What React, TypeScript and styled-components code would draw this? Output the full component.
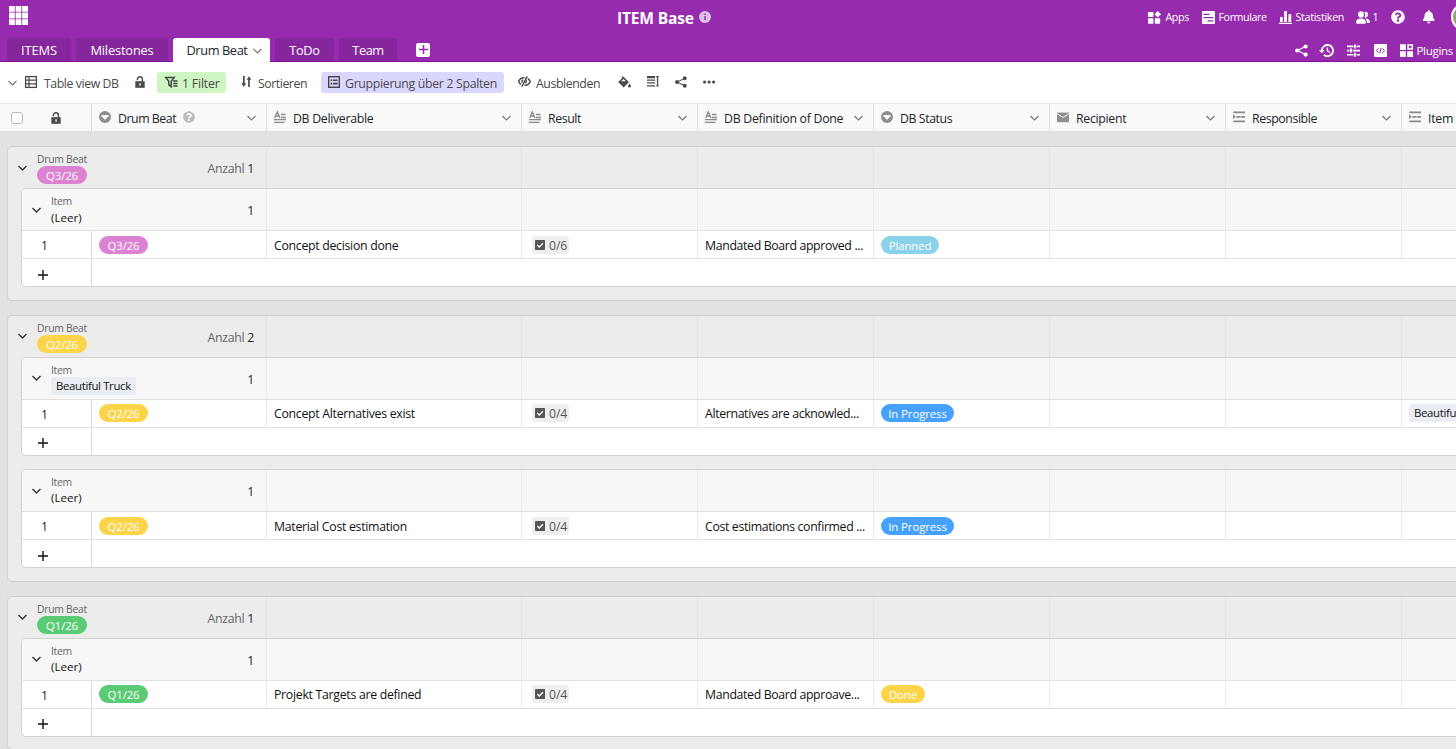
import React from "react";
import styled, { createGlobalStyle } from "styled-components";
import { FaBell, FaQuestionCircle } from "react-icons/fa";

const GlobalStyle = createGlobalStyle`
  *, *::before, *::after { box-sizing: border-box; }
  body {
    margin: 0;
    overflow: hidden;
    font-family: "Open Sans", "Noto Sans", sans-serif;
    font-size: 12.3px;
    color: #212529;
    background: #fff;
  }
`;

const Page = styled.div`
  display: flex;
  flex-direction: column;
  width: 1456px;
  height: 749px;
  overflow: hidden;
  background: #fff;
`;

const Header = styled.header`
  flex: none;
  height: 62px;
  background: #972bae;
  border-bottom: 1px solid #8410a0;
  color: #fff;
`;

const HeaderRow = styled.div<{ $h: number }>`
  display: flex;
  align-items: center;
  height: ${(p) => p.$h}px;
`;

const Svg = styled.svg`
  display: block;
  flex: none;
  overflow: visible;
`;

const Label = styled.span<{
  $w?: number;
  $ls?: number;
  $size?: number;
  $color?: string;
  $bold?: boolean;
  $drop?: number;
}>`
  flex: none;
  display: block;
  white-space: nowrap;
  line-height: 18px;
  padding-top: ${(p) => p.$drop ?? 2}px;
  width: ${(p) => (p.$w ? `${p.$w}px` : "auto")};
  letter-spacing: ${(p) => p.$ls ?? 0}px;
  font-size: ${(p) => p.$size ?? 12.3}px;
  font-weight: ${(p) => (p.$bold ? 700 : 400)};
  color: ${(p) => p.$color ?? "inherit"};
`;

const Slot = styled.div<{ $ml: number; $gap?: number; $mt?: number }>`
  display: flex;
  flex: none;
  align-items: center;
  gap: ${(p) => p.$gap ?? 0}px;
  margin-left: ${(p) => p.$ml}px;
  margin-top: ${(p) => p.$mt ?? 0}px;
`;

const Actions = styled.div<{ $w: number; $mt: number }>`
  display: flex;
  flex: none;
  align-items: center;
  width: ${(p) => p.$w}px;
  margin-left: auto;
  margin-top: ${(p) => p.$mt}px;
  overflow: hidden;
`;

const Avatar = styled.div`
  flex: none;
  width: 28px;
  height: 28px;
  margin-left: 16px;
  border: 2px solid #fff;
  border-radius: 50%;
  background: #a99a78;
`;

const Tab = styled.div<{ $w: number; $active?: boolean }>`
  display: flex;
  flex: none;
  align-items: center;
  align-self: flex-end;
  justify-content: center;
  gap: 5px;
  width: ${(p) => p.$w}px;
  height: ${(p) => (p.$active ? 24 : 23)}px;
  margin-right: 5px;
  margin-bottom: ${(p) => (p.$active ? -1 : 0)}px;
  padding: 0 0 ${(p) => (p.$active ? 1 : 0)}px ${(p) => (p.$active ? 5 : 0)}px;
  border-radius: 3px 3px 0 0;
  background: ${(p) => (p.$active ? "#fff" : "#86269c")};
  color: ${(p) => (p.$active ? "#212529" : "#fff")};
`;

const AddTab = styled.div`
  display: flex;
  align-items: center;
  justify-content: center;
  width: 14px;
  height: 14px;
  margin: 2px 0 0 14px;
  border-radius: 2px;
  background: #fff;
`;

const Toolbar = styled.div`
  display: flex;
  flex: none;
  align-items: center;
  height: 41px;
  color: #4a4a4a;
`;

const Pill = styled.div<{ $ml: number; $w: number; $bg: string; $pad: number; $gap: number }>`
  display: flex;
  flex: none;
  align-items: center;
  gap: ${(p) => p.$gap}px;
  width: ${(p) => p.$w}px;
  height: 21px;
  margin-left: ${(p) => p.$ml}px;
  padding-left: ${(p) => p.$pad}px;
  border-radius: 3px;
  background: ${(p) => p.$bg};
`;

const ColumnBar = styled.div`
  display: flex;
  flex: none;
  height: 29px;
  border-top: 1px solid #e8e8e8;
  border-bottom: 1px solid #e0e0e0;
  background: #f9f9f9;
`;

const RowTools = styled.div`
  display: flex;
  flex: none;
  align-items: center;
  width: 92px;
  padding-left: 11px;
  gap: 39px;
  border-right: 1px solid #dcdcdc;
`;

const Checkbox = styled.div`
  width: 12px;
  height: 12px;
  border: 1px solid #b9b9c6;
  border-radius: 3px;
  background: #fff;
`;

const ColumnHead = styled.div<{ $w: number }>`
  display: flex;
  flex: none;
  align-items: center;
  width: ${(p) => p.$w}px;
  padding: 0 10px 0 7px;
  border-right: 1px solid #dedede;
`;

const ColumnName = styled.div`
  display: flex;
  align-items: center;
  gap: 7px;
  margin-right: auto;
  svg { margin-top: -1px; }
`;

const Body = styled.main`
  flex: 1;
  padding: 14px 0 0 7px;
  background: #e2e2e2;
  overflow: hidden;
`;

const Group = styled.section`
  width: 1500px;
  margin-bottom: 14px;
  padding-bottom: 12.75px;
  border: 1px solid #cfcfcf;
  border-radius: 5px;
  background: #ececec;
`;

const GroupHead = styled.div`
  display: flex;
  height: 41px;
`;

const HeadMain = styled.div<{ $w: number; $line: string }>`
  display: flex;
  flex: none;
  align-items: center;
  width: ${(p) => p.$w}px;
  padding: 0 12px 0 10px;
  border-right: 1px solid ${(p) => p.$line};
`;

const HeadText = styled.div`
  display: flex;
  flex-direction: column;
  align-items: flex-start;
  align-self: flex-start;
  height: 36px;
  margin: 5px auto 0 10px;
`;

const Caption = styled.div`
  height: 14px;
  line-height: 15px;
  font-size: 10.4px;
  letter-spacing: -0.28px;
  color: #666;
  white-space: nowrap;
`;

const Option = styled.div<{ $bg: string; $w: number }>`
  flex: none;
  width: ${(p) => p.$w}px;
  height: 18px;
  border-radius: 9px;
  background: ${(p) => p.$bg};
  color: #fff;
  font-size: 11.4px;
  line-height: 19px;
  letter-spacing: -0.1px;
  text-align: center;
  white-space: nowrap;
`;

const Link = styled.div`
  flex: none;
  height: 18px;
  padding: 0 5px;
  border-radius: 3px;
  background: #eaedf4;
  color: #111;
  font-size: 11.4px;
  line-height: 18px;
  letter-spacing: -0.35px;
  white-space: nowrap;
`;

const Empty = styled.div`
  height: 18px;
  margin-top: 0.5px;
  color: #111;
  font-size: 11.6px;
  line-height: 18px;
`;

const Count = styled.div`
  display: flex;
  gap: 3px;
  padding-top: 2px;
  letter-spacing: -0.3px;
  color: #666;
  b { font-weight: 400; color: #212529; }
`;

const Cell = styled.div<{ $w: number; $line?: string }>`
  display: flex;
  flex: none;
  align-items: center;
  width: ${(p) => p.$w}px;
  padding: 0 7px;
  border-right: 1px solid ${(p) => p.$line ?? "#ebebeb"};
`;

const SubGroup = styled.div`
  margin: 0 0 0 13px;
  border: 1px solid #d2d2d2;
  border-radius: 5px;
  background: #fff;
  overflow: hidden;
  & + & { margin-top: 13.4px; }
`;

const SubHead = styled.div`
  display: flex;
  height: 41.15px;
  background: #f7f7f7;
`;

const Row = styled.div<{ $h: number }>`
  display: flex;
  height: ${(p) => p.$h}px;
  border-top: 1px solid #e1e1e1;
`;

const IndexCell = styled.div`
  display: flex;
  flex: none;
  align-items: center;
  width: 70px;
  padding: 2px 0 0 19px;
  border-right: 1px solid #d8d8d8;
`;

const AddCell = styled(IndexCell)`
  padding: 4px 0 0 16px;
`;

const Progress = styled.div`
  display: flex;
  align-items: center;
  gap: 4px;
  height: 18px;
  margin-left: 3px;
  padding: 0 2px 0 3px;
  border-radius: 3px;
  background: #eeeeee;
  color: #555;
`;

const Chevron = ({ c = "#666", sw = 1.2 }: { c?: string; sw?: number }) => (
  <Svg width={9} height={6} viewBox="0 0 9 6" fill="none" stroke={c} strokeWidth={sw}>
    <path d="M.5 1 4.5 5l4-4" />
  </Svg>
);

const GridLogo = () => (
  <Svg width="19" height="19" viewBox="0 0 19 19" fill="#fff">
    {[0, 6.6, 13.2].map((y) =>
      [0, 6.6, 13.2].map((x) => <rect key={`${x}-${y}`} x={x} y={y} width="5.8" height="5.8" rx=".3" />)
    )}
  </Svg>
);

const InfoIcon = () => (
  <Svg width="12" height="12" viewBox="0 0 12 12">
    <circle cx="6" cy="6" r="6" fill="#e0bfe7" />
    <path d="M5.3 5h1.5v4H5.3zM5.3 2.6h1.5v1.3H5.3z" fill="#972bae" />
  </Svg>
);

const AppsIcon = () => (
  <Svg width="13" height="13" viewBox="0 0 13 13" fill="#fff">
    <rect y="1" width="5.4" height="5" rx=".6" />
    <rect y="7.3" width="5.4" height="5.4" rx=".6" />
    <rect x="6.8" y="7.3" width="5.4" height="5.4" rx=".6" />
    <path d="M9.7 0 13 3.3 9.7 6.6 6.4 3.3z" />
  </Svg>
);

const FormIcon = () => (
  <Svg width="13" height="13" viewBox="0 0 13 13">
    <rect width="13" height="13" rx="1" fill="#fff" />
    <path d="M1.5 3.4h6M1.5 6.6h10M5.5 9.8h6" stroke="#972bae" strokeWidth="1.2" />
  </Svg>
);

const ChartIcon = () => (
  <Svg width="13" height="13" viewBox="0 0 13 13" fill="#fff">
    <path d="M0 11.8h13V13H0zM1 6h2.8v5H1zM5.1 0h2.8v11H5.1zM9.4 3.2h2.8V11H9.4z" />
  </Svg>
);

const UsersIcon = () => (
  <Svg width="14" height="13" viewBox="0 0 14 13" fill="#fff">
    <path d="M8.2.9a2.9 2.9 0 1 1 1 5.6c-.3 0-.6 0-.9-.2a4.6 4.6 0 0 0-.1-5.4zM9.6 7.4c2.6 0 4.3 1.4 4.3 3.6 0 .8-.3 1.1-1 1.1h-2c.1-1.9-.5-3.4-1.9-4.6z" />
    <ellipse cx="5" cy="3.5" rx="2.9" ry="3.3" />
    <path d="M5 7.6c3 0 4.900 1.500 4.900 4 0 .8-.3 1.100-1 1.100H1.100c-.7 0-1.100-.3-1.100-1.100 0-2.500 2-4 5-4z" />
  </Svg>
);

const HistoryIcon = () => (
  <Svg width="15" height="13" viewBox="0 0 15 13" fill="none" stroke="#fff">
    <path d="M2.9 6.5A5.6 5.6 0 1 1 4.8 10.8" strokeWidth="1.8" />
    <path d="M8.4 3.4v3.5l2.6 1.6" strokeWidth="1.4" />
    <path d="M0 6.2h5.6L2.8 9.3z" fill="#fff" stroke="none" />
  </Svg>
);

const ShareIcon = ({ s = 13, c = "#fff" }: { s?: number; c?: string }) => (
  <Svg width={s} height={s} viewBox="0 0 13 13" fill={c}>
    <path d="M10.5 2.6 2.3 6.5l8.2 4" fill="none" stroke={c} strokeWidth="1.1" />
    <circle cx="10.6" cy="2.5" r="2.1" />
    <circle cx="2.2" cy="6.5" r="2.1" />
    <circle cx="10.6" cy="10.6" r="2.1" />
  </Svg>
);

const SlidersIcon = () => (
  <Svg width="13" height="13" viewBox="0 0 13 13" fill="#fff">
    <path d="M0 1.6h6.4v1.6H0zM9.6 1.6H13v1.6H9.6zM7 .4h1.8v4H7zM0 5.8h2.4v1.6H0zM5.6 5.8H13v1.6H5.6zM3 4.6h1.8v4H3zM0 10h6.4v1.6H0zM9.6 10H13v1.6H9.6zM7 8.8h1.8v4H7z" />
  </Svg>
);

const CodeIcon = () => (
  <Svg width="13" height="13" viewBox="0 0 13 13">
    <rect width="13" height="13" rx="1" fill="#fff" />
    <path d="M4.5 4.4 2.5 6.6l2 2.2M8.5 4.4l2 2.2-2 2.2M7.2 3.8 5.8 9.2" fill="none" stroke="#972bae" />
  </Svg>
);

const PluginsIcon = () => (
  <Svg width="13" height="13" viewBox="0 0 13 13" fill="#fff">
    <path d="M0 .3h5.8v5.6H0zM0 7.3h5.8v5.6H0zM7.2 7.3H13v5.6H7.2z" />
    <path d="M8 1.1h4.2v4H8z" fill="none" stroke="#fff" strokeWidth="1.5" />
  </Svg>
);

const PlusIcon = ({ s, c, sw }: { s: number; c: string; sw: number }) => (
  <Svg width={s} height={s} viewBox="0 0 10 10" stroke={c} strokeWidth={sw}>
    <path d="M5 0v10M0 5h10" />
  </Svg>
);

const TableIcon = () => (
  <Svg width="12" height="12" viewBox="0 0 12 12" fill="none" stroke="#4a4a4a">
    <rect x=".6" y=".6" width="10.8" height="10.8" strokeWidth="1.3" />
    <path d="M0 4.2h12M0 7.8h12M4 .9v10.4" strokeWidth="1.2" />
  </Svg>
);

const LockIcon = () => (
  <Svg width="10" height="12" viewBox="0 0 10 12">
    <path d="M2.4 4.2v-1a2.5 2.5 0 0 1 5 0v2.4" fill="none" stroke="#4a4a4a" strokeWidth="1.4" />
    <path d="M.3 5.2h9.4v6.6H.3z" fill="#4a4a4a" />
    <path d="M4.4 7.3h1.3v2.4H4.4z" fill="#fff" />
  </Svg>
);

const FilterIcon = () => (
  <Svg width="13" height="12" viewBox="0 0 13 12" fill="none" stroke="#3f4a3c">
    <path d="M.7 1.4h8.6L6.2 5.3v5.4L3.8 8.9V5.3z" strokeWidth="1.5" />
    <path d="M8.2 4.9h4.3M8.2 7.5h4.3M8.2 10.1h4.3" strokeWidth="1.5" />
  </Svg>
);

const SortIcon = () => (
  <Svg width="11" height="11" viewBox="0 0 11 11" fill="#4a4a4a">
    <path d="M2 0h1.7v7.2H5.2L2.8 10.8.2 7.2H2zM7.1 11h1.7V3.8h1.6L8 .2 5.6 3.8h1.5z" />
  </Svg>
);

const GroupIcon = () => (
  <Svg width="12" height="12" viewBox="0 0 12 12" fill="none" stroke="#444">
    <rect x=".7" y=".7" width="10.6" height="10.6" strokeWidth="1.4" />
    <path d="M2.6 4.2h1.6M5 4.2h4.6M2.6 7.6h1.6M5 7.6h4.6" strokeWidth="1.6" />
  </Svg>
);

const HideIcon = () => (
  <Svg width="13" height="11" viewBox="0 0 13 11" fill="none" stroke="#4a4a4a">
    <path d="M6.6 1.7C3.6 1.5 1.6 3.2.7 5.4c.5 1.3 1.3 2.2 2.3 2.9M9.8 2.6c1.1.7 2 1.7 2.5 2.9-.9 2.3-3 3.9-5.9 3.7" strokeWidth="1.5" />
    <path d="M9.2.4 3.8 10.6" strokeWidth="1.4" />
    <path d="M5.1 4a2 2 0 0 0-1 2.6M8 4.1a2 2 0 0 1-1.1 3" strokeWidth="1.4" />
  </Svg>
);

const FillIcon = () => (
  <Svg width="13" height="12" viewBox="0 0 13 12" fill="#4a4a4a">
    <path d="M4.6 0 11 6l-5.3 5.4L.2 6l4.3-4.2-.9-.9z" />
    <path d="M3.2 5.3h4.700L5.500 3z" fill="#fff" />
    <path d="M11.5 7.400c.9 1.300 1.400 2.100 1.400 2.800a1.400 1.400 0 0 1-2.800 0c0-.7.5-1.500 1.400-2.800z" />
  </Svg>
);

const HeightIcon = () => (
  <Svg width="12" height="11" viewBox="0 0 12 11" fill="#4a4a4a">
    <path d="M0 0h8.2v2.2H0zM0 3.5h8.2v1.3H0zM0 6.3h8.2v1.3H0zM0 9.2h8.2v1.3H0zM9.9.6h1.3v9.5H9.9zM9.2 0h2.6v1.2H9.2zM9.2 9.4h2.6v1.2H9.2z" />
  </Svg>
);

const DotsIcon = () => (
  <Svg width="12" height="4" viewBox="0 0 12 4" fill="#4a4a4a">
    <circle cx="1.6" cy="2" r="1.6" />
    <circle cx="6.1" cy="2" r="1.6" />
    <circle cx="10.6" cy="2" r="1.6" />
  </Svg>
);

const SelectIcon = () => (
  <Svg width="12" height="12" viewBox="0 0 12 12">
    <circle cx="6" cy="6" r="6" fill="#8f8f8f" />
    <path d="M2.4 3.900h7.200v1.300L6 8.800 2.400 5.200z" fill="#fff" />
  </Svg>
);

const LongTextIcon = () => (
  <Svg width="12" height="12" viewBox="0 0 12 12" fill="none" stroke="#8a8a8a">
    <path d="M.6 6.9 3.3.9 6 6.9M1.6 5h3.5M7 3.5h4.500M7 6.500h5M0 8.700h12M0 11.400h10.600" strokeWidth="1.300" />
  </Svg>
);

const MailIcon = () => (
  <Svg width="12" height="11" viewBox="0 0 12 11">
    <path d="M0 .6h12v9.6H0z" fill="#8f8f8f" />
    <path d="M0 1.8 6 5.4l6-3.6" fill="none" stroke="#f9f9f9" strokeWidth="1" />
  </Svg>
);

const LinkIcon = () => (
  <Svg width="12" height="12" viewBox="0 0 12 12" fill="#8a8a8a">
    <path d="M.3.5H12v1.700H.3zM.3 9.500H12v1.700H.3zM3.400 5h3.400v1.700H3.400zM7.500 5H12v1.700H7.500zM0 3.500l2.900 2.350L0 8.200z" />
  </Svg>
);

const HelpIcon = () => <FaQuestionCircle size={12} color="#bdbdbd" />;

const CheckIcon = () => (
  <Svg width="10" height="10" viewBox="0 0 10 10">
    <rect width="10" height="10" rx=".8" fill="#555" />
    <path d="M2.2 5 4.3 7l3.6-3.8" fill="none" stroke="#fff" strokeWidth="1.3" />
  </Svg>
);

type IconName = "select" | "text" | "mail" | "link";

const columnIcons: Record<IconName, React.ReactNode> = {
  select: <SelectIcon />,
  text: <LongTextIcon />,
  mail: <MailIcon />,
  link: <LinkIcon />,
};

const columns: { name: string; icon: IconName; width: number; help?: boolean; ls: number }[] = [
  { name: "Drum Beat", icon: "select", width: 175, help: true, ls: -0.45 },
  { name: "DB Deliverable", icon: "text", width: 255, ls: -0.3 },
  { name: "Result", icon: "text", width: 176, ls: -0.4 },
  { name: "DB Definition of Done", icon: "text", width: 176, ls: -0.27 },
  { name: "DB Status", icon: "select", width: 176, ls: -0.4 },
  { name: "Recipient", icon: "mail", width: 176, ls: -0.3 },
  { name: "Responsible", icon: "link", width: 176, ls: -0.4 },
  { name: "Item", icon: "link", width: 176, ls: -0.25 },
];

const optionColors: Record<string, string> = {
  "Q3/26": "#dc82d2",
  "Q2/26": "#fbd44a",
  "Q1/26": "#59cb74",
  Planned: "#89d2ea",
  "In Progress": "#46a1fd",
  Done: "#fbd44a",
};

const optionWidths: Record<string, number> = { Planned: 58, "In Progress": 73, Done: 44 };

type Deliverable = {
  item?: string;
  deliverable: string;
  result: string;
  done: string;
  status: string;
};

const groups: { quarter: string; records: Deliverable[] }[] = [
  {
    quarter: "Q3/26",
    records: [
      { deliverable: "Concept decision done", result: "0/6", done: "Mandated Board approved ...", status: "Planned" },
    ],
  },
  {
    quarter: "Q2/26",
    records: [
      {
        item: "Beautiful Truck",
        deliverable: "Concept Alternatives exist",
        result: "0/4",
        done: "Alternatives are acknowled...",
        status: "In Progress",
      },
      { deliverable: "Material Cost estimation", result: "0/4", done: "Cost estimations confirmed ...", status: "In Progress" },
    ],
  },
  {
    quarter: "Q1/26",
    records: [
      { deliverable: "Projekt Targets are defined", result: "0/4", done: "Mandated Board approave...", status: "Done" },
    ],
  },
];

const EmptyCells = ({ line }: { line: string }) => (
  <>
    {columns.slice(1).map((c) => (
      <Cell key={c.name} $w={c.width} $line={line} />
    ))}
  </>
);

const SubGroupView = ({ quarter, record }: { quarter: string; record: Deliverable }) => (
  <SubGroup>
    <SubHead>
      <HeadMain $w={245} $line="#ebebeb">
        <Chevron c="#333" sw={1.4} />
        <HeadText>
          <Caption>Item</Caption>
          {record.item ? <Link>{record.item}</Link> : <Empty>(Leer)</Empty>}
        </HeadText>
        <Count>
          <b>1</b>
        </Count>
      </HeadMain>
      <EmptyCells line="#ebebeb" />
    </SubHead>
    <Row $h={28.1}>
      <IndexCell>1</IndexCell>
      <Cell $w={175}>
        <Option $bg={optionColors[quarter]} $w={49}>{quarter}</Option>
      </Cell>
      <Cell $w={255}>
        <Label $ls={-0.29} $color="#111">{record.deliverable}</Label>
      </Cell>
      <Cell $w={176}>
        <Progress>
          <CheckIcon />
          <Label $ls={-0.1}>{record.result}</Label>
        </Progress>
      </Cell>
      <Cell $w={176}>
        <Label $ls={-0.35} $color="#111">{record.done}</Label>
      </Cell>
      <Cell $w={176}>
        <Option $bg={optionColors[record.status]} $w={optionWidths[record.status]}>{record.status}</Option>
      </Cell>
      <Cell $w={176} />
      <Cell $w={176} />
      <Cell $w={176}>{record.item && <Link>{record.item}</Link>}</Cell>
    </Row>
    <Row $h={27.7}>
      <AddCell>
        <PlusIcon s={10} c="#111" sw={1.4} />
      </AddCell>
    </Row>
  </SubGroup>
);

export default function App() {
  return (
    <Page>
      <GlobalStyle />
      <Header>
        <HeaderRow $h={36}>
          <Slot $ml={9} $mt={-5}>
            <GridLogo />
          </Slot>
          <Slot $ml={589} $gap={4.5}>
            <Label $w={77.5} $size={15.6} $bold $ls={-0.2} $drop={0}>ITEM Base</Label>
            <Slot $ml={0} $mt={-2}>
              <InfoIcon />
            </Slot>
          </Slot>
          <Actions $w={309} $mt={-2}>
            <Slot $ml={0.5} $gap={5}>
              <AppsIcon />
              <Label $w={24} $size={10.7} $ls={-0.4} $drop={0}>Apps</Label>
            </Slot>
            <Slot $ml={12} $gap={4}>
              <FormIcon />
              <Label $w={48} $size={10.7} $ls={-0.4} $drop={0}>Formulare</Label>
            </Slot>
            <Slot $ml={12} $gap={4}>
              <ChartIcon />
              <Label $w={49} $size={10.7} $ls={-0.3} $drop={0}>Statistiken</Label>
            </Slot>
            <Slot $ml={11} $gap={3}>
              <UsersIcon />
              <Label $w={6} $size={10.7} $drop={0}>1</Label>
            </Slot>
            <Slot $ml={12.5}>
              <FaQuestionCircle size={14} />
            </Slot>
            <Slot $ml={16.5}>
              <FaBell size={13.500} />
            </Slot>
            <Avatar />
          </Actions>
        </HeaderRow>
        <HeaderRow $h={25}>
          <Slot $ml={7} />
          <Tab $w={64}><Label $size={12.8} $ls={-0.05} $drop={1.4}>ITEMS</Label></Tab>
          <Tab $w={92}><Label $size={12.8} $ls={-0.15} $drop={1.4}>Milestones</Label></Tab>
          <Tab $w={97} $active>
            <Label $size={12.8} $ls={-0.4} $drop={1.4}>Drum Beat</Label>
            <Slot $ml={0} $mt={2}>
              <Chevron c="#777" />
            </Slot>
          </Tab>
          <Tab $w={59}><Label $size={12.8} $ls={-0.35} $drop={1.4}>ToDo</Label></Tab>
          <Tab $w={58}><Label $size={12.8} $ls={-0.45} $drop={1.4}>Team</Label></Tab>
          <AddTab>
            <PlusIcon s={9} c="#972bae" sw={1.7} />
          </AddTab>
          <Actions $w={162} $mt={4}>
            <Slot $ml={1}><ShareIcon /></Slot>
            <Slot $ml={11}><HistoryIcon /></Slot>
            <Slot $ml={12.5}><SlidersIcon /></Slot>
            <Slot $ml={14}><CodeIcon /></Slot>
            <Slot $ml={13} $gap={4}>
              <PluginsIcon />
              <Label $w={38} $size={11.6} $ls={-0.35} $drop={1}>Plugins</Label>
            </Slot>
          </Actions>
        </HeaderRow>
      </Header>

      <Toolbar>
        <Slot $ml={8}><Chevron c="#777" /></Slot>
        <Slot $ml={8} $gap={7}>
          <Slot $ml={0} $mt={-1}><TableIcon /></Slot>
          <Label $w={74} $ls={-0.42}>Table view DB</Label>
        </Slot>
        <Slot $ml={17} $mt={-2}><LockIcon /></Slot>
        <Pill $ml={12} $w={69} $bg="#cff5c2" $pad={8} $gap={4}>
          <Slot $ml={0} $mt={-1}><FilterIcon /></Slot>
          <Label $ls={-0.2}>1 Filter</Label>
        </Pill>
        <Slot $ml={15} $gap={6}>
          <Slot $ml={0} $mt={-2}><SortIcon /></Slot>
          <Label $w={50} $ls={-0.45}>Sortieren</Label>
        </Slot>
        <Pill $ml={13} $w={183} $bg="#dad7ff" $pad={7} $gap={5}>
          <Slot $ml={0} $mt={-1}><GroupIcon /></Slot>
          <Label $ls={-0.31}>Gruppierung über 2 Spalten</Label>
        </Pill>
        <Slot $ml={14} $gap={5}>
          <Slot $ml={0} $mt={-2}><HideIcon /></Slot>
          <Label $w={65} $ls={-0.42}>Ausblenden</Label>
        </Slot>
        <Slot $ml={17} $mt={-1}><FillIcon /></Slot>
        <Slot $ml={16} $mt={-2}><HeightIcon /></Slot>
        <Slot $ml={16} $mt={-2}><ShareIcon s={12} c="#4a4a4a" /></Slot>
        <Slot $ml={16} $mt={-2}><DotsIcon /></Slot>
      </Toolbar>

      <ColumnBar>
        <RowTools>
          <Checkbox />
          <Slot $ml={-11}><LockIcon /></Slot>
        </RowTools>
        {columns.map((c) => (
          <ColumnHead key={c.name} $w={c.width}>
            <ColumnName>
              {columnIcons[c.icon]}
              <Label $ls={c.ls}>{c.name}</Label>
              {c.help && <HelpIcon />}
            </ColumnName>
            <Chevron c="#777" />
          </ColumnHead>
        ))}
      </ColumnBar>

      <Body>
        {groups.map((g) => (
          <Group key={g.quarter}>
            <GroupHead>
              <HeadMain $w={259} $line="#e3e3e3">
                <Chevron c="#333" sw={1.4} />
                <HeadText>
                  <Caption>Drum Beat</Caption>
                  <Option $bg={optionColors[g.quarter]} $w={50}>{g.quarter}</Option>
                </HeadText>
                <Count>
                  Anzahl <b>{g.records.length}</b>
                </Count>
              </HeadMain>
              <EmptyCells line="#e3e3e3" />
            </GroupHead>
            {g.records.map((r) => (
              <SubGroupView key={r.deliverable} quarter={g.quarter} record={r} />
            ))}
          </Group>
        ))}
      </Body>
    </Page>
  );
}
